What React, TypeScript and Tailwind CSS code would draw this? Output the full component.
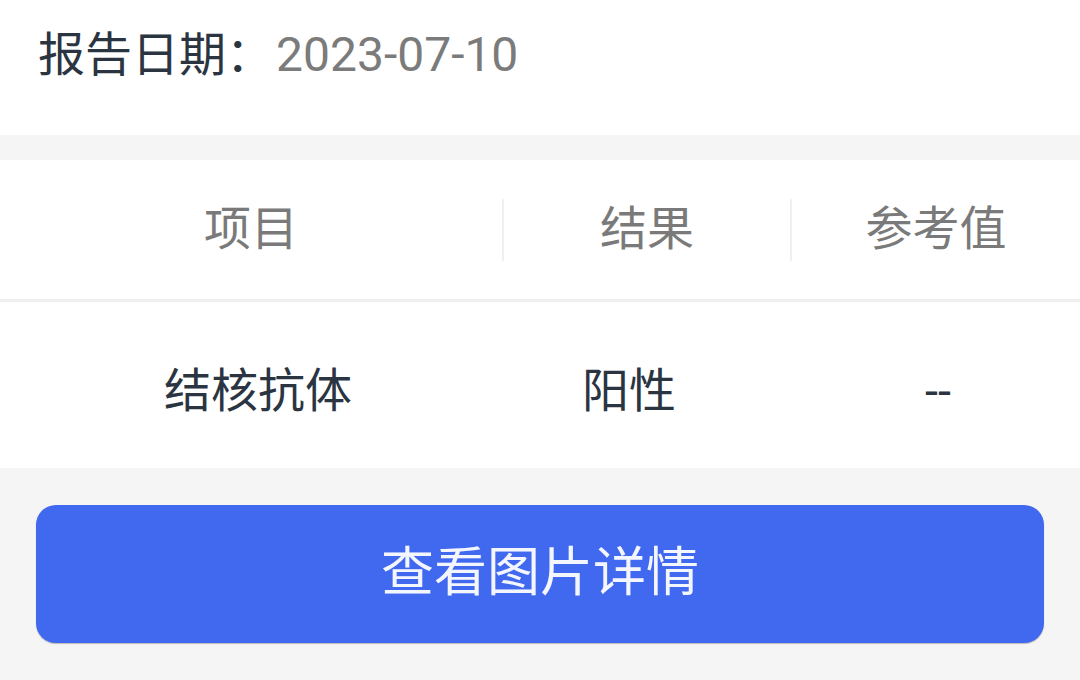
const rows = [{ name: "结核抗体", result: "阳性", ref: "--" }];

export default function App() {
  return (
    <div
      className="flex h-[680px] w-[1080px] flex-col overflow-hidden bg-[#f5f5f5]"
      style={{ fontFamily: "Roboto, 'Noto Sans CJK SC', sans-serif" }}
    >
      {/* Report date */}
      <div className="h-[135px] bg-white px-[38px] pt-[22px]">
        <div className="flex items-center text-[47px] leading-[66px]">
          <span className="text-[#2b3542]">报告日期：</span>
          <span className="ml-[3px] text-[48px] text-[#7b7b7b]">2023-07-10</span>
        </div>
      </div>

      {/* Table */}
      <div className="mt-[25px] bg-white">
        <div className="grid h-[142px] grid-cols-[502px_288px_1fr] items-center border-b-[3px] border-[#efefef] text-[47px] text-[#7a7a7a]">
          <div className="flex justify-center">项目</div>
          <div className="flex h-[62px] items-center justify-center border-l-2 border-[#f0f0f0]">结果</div>
          <div className="flex h-[62px] items-center justify-center border-l-2 border-[#f0f0f0]">参考值</div>
        </div>
        {rows.map((r) => (
          <div
            key={r.name}
            className="grid h-[166px] grid-cols-[502px_288px_1fr] items-center pt-[12px] text-[47px] text-[#2b3542]"
          >
            <div className="flex justify-center pl-[14px]">{r.name}</div>
            <div className="flex justify-center pr-[34px]">{r.result}</div>
            <div className="flex justify-center pl-[6px]">{r.ref}</div>
          </div>
        ))}
      </div>

      {/* Action */}
      <div className="px-[36px] pt-[37px]">
        <button className="flex h-[138px] w-full items-center justify-center rounded-[20px] bg-[#4169ef] text-[53px] text-[#f4f6ff] shadow-[0_1px_1px_rgba(0,0,0,0.25)]">
          查看图片详情
        </button>
      </div>
    </div>
  );
}
